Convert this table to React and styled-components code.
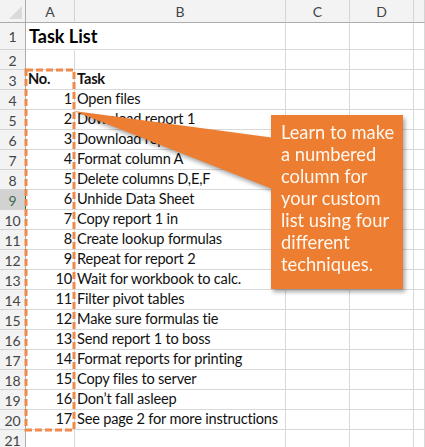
import React from 'react'
import styled, { createGlobalStyle } from 'styled-components'

const GlobalStyle = createGlobalStyle`
  html, body {
    margin: 0;
    padding: 0;
    background: #fff;
    overflow: hidden;
  }
  body {
    font-family: Lato, "Open Sans", "Liberation Sans", sans-serif;
  }
`

const Page = styled.div`
  position: relative;
  width: 425px;
  height: 447px;
  overflow: hidden;
`

const Sheet = styled.div`
  display: grid;
  grid-template-columns: 26px 49px 211px 64px 64px 1fr;
`

const Cell = styled.div`
  box-sizing: border-box;
  height: ${p => p.$h}px;
  border-right: 1px solid ${p => (p.$spill ? 'transparent' : '#d9d9d9')};
  border-bottom: 1px solid #d9d9d9;
  display: flex;
  align-items: flex-end;
  justify-content: ${p => (p.$right ? 'flex-end' : 'flex-start')};
  padding: 0 2px 1px 2px;
  font-size: 14.6px;
  letter-spacing: -0.2px;
  line-height: 18px;
  color: #111;
  white-space: nowrap;
  overflow: visible;
  position: relative;
  z-index: ${p => (p.$spill ? 1 : 0)};
`

const Title = styled.span`
  font-size: 18px;
  font-weight: 700;
  line-height: 24px;
  letter-spacing: 0;
  color: #000;
  padding-left: 1px;
`

const Bold = styled.span`
  font-weight: 700;
`

const ColHead = styled.div`
  box-sizing: border-box;
  height: 23px;
  background: #f3f3f3;
  border-right: 1px solid #d4d4d4;
  border-bottom: 1px solid #ababab;
  display: flex;
  align-items: center;
  justify-content: center;
  font-size: 14px;
  color: #444;
  position: relative;
`

const Corner = styled(ColHead)`
  border-right: 1px solid #ababab;
  &::after {
    content: '';
    position: absolute;
    right: 3px;
    bottom: 3px;
    border-style: solid;
    border-width: 0 0 13px 13px;
    border-color: transparent transparent #dadada transparent;
  }
`

const RowHead = styled.div`
  box-sizing: border-box;
  height: ${p => p.$h}px;
  background: ${p => (p.$active ? '#d2d2d2' : '#f3f3f3')};
  border-right: 1px solid ${p => (p.$active ? '#217346' : '#ababab')};
  border-bottom: 1px solid #d4d4d4;
  display: flex;
  align-items: center;
  justify-content: center;
  font-size: 14px;
  color: ${p => (p.$active ? '#3f6a4e' : '#444')};
  padding-top: 1px;
`

const Marquee = styled.svg`
  position: absolute;
  left: 0;
  top: 0;
  pointer-events: none;
  z-index: 2;
`

const CalloutLayer = styled.div`
  position: absolute;
  inset: 0;
  pointer-events: none;
  z-index: 3;
  filter: drop-shadow(2px 3px 2px rgba(0, 0, 0, 0.35));
`

const Pointer = styled.svg`
  position: absolute;
  left: 0;
  top: 0;
`

const Bubble = styled.div`
  position: absolute;
  left: 271px;
  top: 115px;
  width: 132px;
  height: 174px;
  box-sizing: border-box;
  background: #ed7d31;
  color: #fff8f0;
  font-size: 18.3px;
  line-height: 22px;
  padding: 6px 4px 0 10px;
`

const tasks = [
  'Open files',
  'Download report 1',
  'Download report 2',
  'Format column A',
  'Delete columns D,E,F',
  'Unhide Data Sheet',
  'Copy report 1 in',
  'Create lookup formulas',
  'Repeat for report 2',
  'Wait for workbook to calc.',
  'Filter pivot tables',
  'Make sure formulas tie',
  'Send report 1 to boss',
  'Format reports for printing',
  'Copy files to server',
  'Don\u2019t fall asleep',
  'See page 2 for more instructions',
]

const rows = [
  { n: 1, h: 27, a: <Title>Task List</Title>, b: null, spill: true },
  { n: 2, h: 20, a: null, b: null },
  { n: 3, h: 20, a: <Bold>No.</Bold>, b: <Bold>Task</Bold> },
  ...tasks.map((t, i) => ({ n: i + 4, h: 20, a: i + 1, b: t, num: true })),
  { n: 21, h: 20, a: null, b: null },
]

const App = () => {
  return (
    <>
      <GlobalStyle />
      <Page>
        <Sheet>
          <Corner />
          <ColHead>A</ColHead>
          <ColHead>B</ColHead>
          <ColHead>C</ColHead>
          <ColHead>D</ColHead>
          <ColHead />
          {rows.map(r => (
            <React.Fragment key={r.n}>
              <RowHead $h={r.h} $active={r.n === 9}>{r.n}</RowHead>
              <Cell $h={r.h} $right={r.num} $spill={r.spill}>{r.a}</Cell>
              <Cell $h={r.h}>{r.b}</Cell>
              <Cell $h={r.h} />
              <Cell $h={r.h} />
              <Cell $h={r.h} />
            </React.Fragment>
          ))}
        </Sheet>

        <Marquee width="425" height="447">
          <rect
            x="26"
            y="70"
            width="48"
            height="360"
            fill="none"
            stroke="#ee8a4a"
            strokeWidth="3"
            strokeDasharray="7 3"
          />
        </Marquee>

        <CalloutLayer>
          <Pointer width="425" height="447">
            <polygon points="74,111 275,138 275,190" fill="#ed7d31" />
          </Pointer>
          <Bubble>
            Learn to make a numbered column for your custom list using four different techniques.
          </Bubble>
        </CalloutLayer>
      </Page>
    </>
  )
}

export default App
